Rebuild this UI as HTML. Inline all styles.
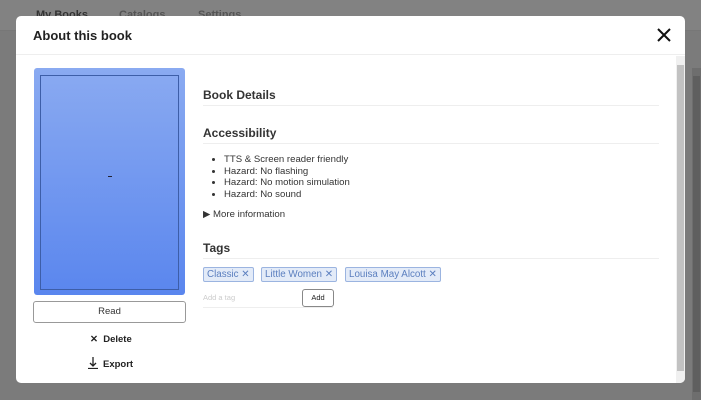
<!DOCTYPE html>
<html><head><style>
*{box-sizing:border-box;margin:0;padding:0}
body{width:701px;height:400px;overflow:hidden;background:#7b7b7b;font-family:"Liberation Sans",sans-serif;position:relative}
.top{position:absolute;left:0;top:0;width:701px;height:31px;background:#828282;border-bottom:1px solid #777}
.top span{position:absolute;top:9px;font-size:11px;font-weight:bold;color:#555}
.pscroll{position:absolute;left:692px;top:68px;width:9px;height:332px;background:#6e6e6e}
.pscroll div{position:absolute;left:1px;top:8px;width:7px;height:316px;background:#5f5f5f}
.modal{position:absolute;left:16px;top:16px;width:669px;height:367px;background:#fff;border-radius:5px;overflow:hidden}
.hdr{height:39px;border-bottom:1px solid #eee;position:relative}
.hdr h1{position:absolute;left:17px;top:12px;font-size:13px;font-weight:bold;color:#222}
.close{position:absolute;left:640px;top:11px}
.msb{position:absolute;left:660px;top:40px;width:9px;height:327px;background:#f0f0f0}
.msb div{position:absolute;left:1px;top:9px;width:7px;height:306px;background:#c2c2c2}
.cover{position:absolute;left:18px;top:52px;width:151px;height:227px;border-radius:3px;background:linear-gradient(#8aaaf1,#5a86ee)}
.cover .in{position:absolute;left:6px;top:7px;width:139px;height:215px;border:1px solid #3d5ea8}
.cover .d{position:absolute;left:74px;top:108px;width:4px;height:1px;background:#223}
.read{position:absolute;left:17px;top:285px;width:153px;height:22px;border:1px solid #999;border-radius:3px;font-size:9.5px;color:#333;text-align:center;line-height:20px}
.act{position:absolute;font-size:9.5px;font-weight:bold;color:#222}
.sec{position:absolute;left:187px;width:456px;border-bottom:1px solid #eee;font-size:12px;font-weight:bold;color:#333;padding-bottom:3px}
ul{position:absolute;left:198px;top:138px;font-size:9.6px;color:#333;line-height:11.5px;list-style:disc;padding-left:10px}
.more{position:absolute;left:187px;top:193px;font-size:9.6px;color:#333}
.chip{position:absolute;top:251px;height:15px;border:1px solid #9bb4e0;background:#e3ebf8;border-radius:2px;font-size:9.8px;color:#5b7fbf;padding:0 3px;line-height:13px}
.inp{position:absolute;left:187px;top:273px;width:130px;height:19px;border-bottom:1px solid #eee;font-size:7.5px;color:#ccc;line-height:17px}
.add{position:absolute;left:286px;top:273px;width:32px;height:18px;border:1px solid #888;border-radius:3px;font-size:7.5px;text-align:center;line-height:16px;color:#222}
</style></head><body>
<div class="top"><span style="left:36px;color:#333">My Books</span><span style="left:119px">Catalogs</span><span style="left:198px">Settings</span></div>
<div class="pscroll"><div></div></div>
<div class="modal">
<div class="hdr"><h1>About this book</h1>
<svg class="close" width="16" height="16" viewBox="0 0 16 16"><path d="M2 2L14 14M14 2L2 14" stroke="#111" stroke-width="2"/></svg></div>
<div class="cover"><div class="in"></div><div class="d"></div></div>
<div class="read">Read</div>
<div class="act" style="left:74px;top:318px">✕&nbsp;&nbsp;Delete</div>
<svg style="position:absolute;left:72px;top:341px" width="10" height="12" viewBox="0 0 10 12"><path d="M5 0V9M2 6L5 9L8 6M0 11.5H10" stroke="#222" stroke-width="1.3" fill="none"/></svg>
<div class="act" style="left:87px;top:343px">Export</div>
<div class="sec" style="top:72px">Book Details</div>
<div class="sec" style="top:110px">Accessibility</div>
<ul><li>TTS &amp; Screen reader friendly</li><li>Hazard: No flashing</li><li>Hazard: No motion simulation</li><li>Hazard: No sound</li></ul>
<div class="more">▶ More information</div>
<div class="sec" style="top:225px">Tags</div>
<div class="chip" style="left:187px">Classic ✕</div>
<div class="chip" style="left:245px">Little Women ✕</div>
<div class="chip" style="left:329px">Louisa May Alcott ✕</div>
<div class="inp">Add a tag</div>
<div class="add">Add</div>
<div class="msb"><div></div></div>
</div>
</body></html>
